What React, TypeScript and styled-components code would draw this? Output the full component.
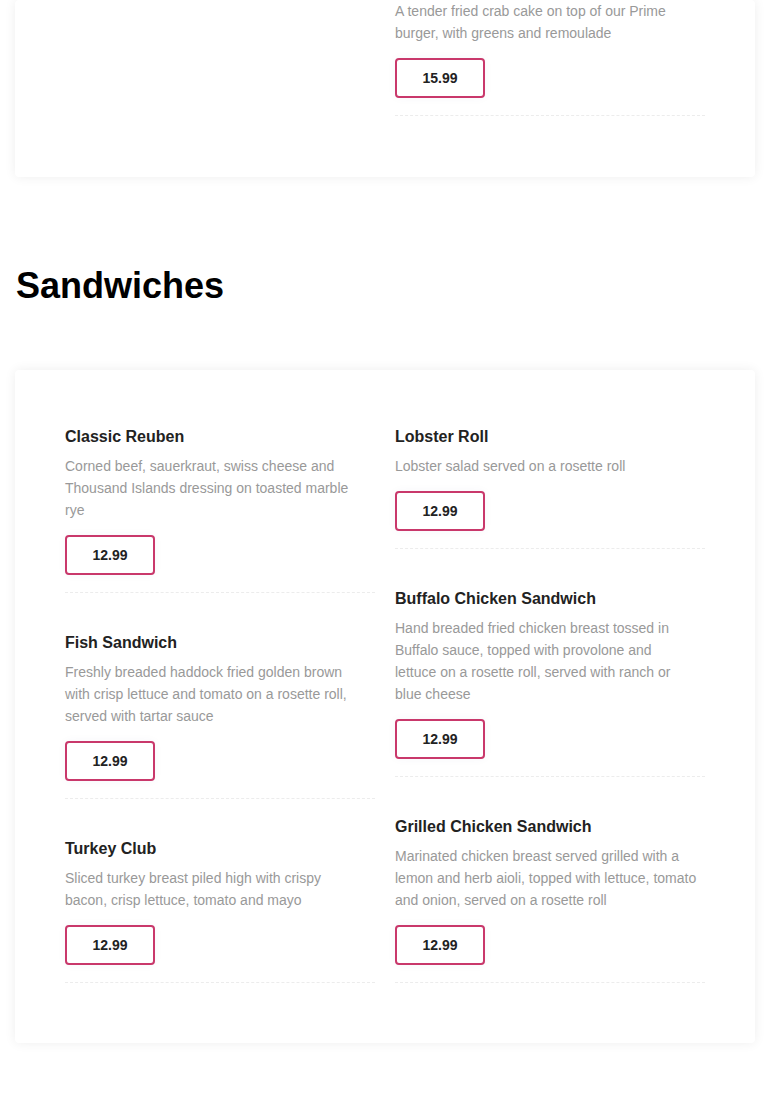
import React from "react";
import styled, { createGlobalStyle } from "styled-components";

const Global = createGlobalStyle`
  html, body { margin: 0; padding: 0; background: #fff; }
  body { font-family: "Liberation Sans", Arial, Helvetica, sans-serif; color: #222; }
  * { box-sizing: border-box; }
`;

const Page = styled.div`
  padding: 0 15px 60px;
`;

const Card = styled.section<{ $top?: number; $bottom?: number }>`
  background: #fff;
  border-radius: 4px;
  box-shadow: 0 0 12px rgba(0, 0, 0, 0.07);
  padding: ${(p) => (p.$top ?? 58)}px 50px ${(p) => (p.$bottom ?? 60)}px;
  display: grid;
  grid-template-columns: 310px 310px;
  column-gap: 20px;
  align-items: start;
`;

const Column = styled.div`
  display: flex;
  flex-direction: column;
  gap: 41px;
`;

const Heading = styled.h2`
  margin: 87px 0 63px 1px;
  font-size: 36px;
  line-height: 43px;
  font-weight: 700;
  color: #000;
`;

const Item = styled.article`
  display: flex;
  flex-direction: column;
  align-items: flex-start;
  padding-bottom: 17px;
  border-bottom: 1px dashed #ececec;
`;

const Title = styled.h3`
  margin: 0 0 9px;
  font-size: 16px;
  line-height: 18px;
  font-weight: 700;
  color: #222;
`;

const Desc = styled.p`
  margin: 0 0 14px;
  max-width: 301.7px;
  font-size: 14px;
  line-height: 22px;
  color: #999;
`;

const Price = styled.button`
  width: 90px;
  height: 40px;
  border: 2px solid #c9386b;
  border-radius: 4px;
  background: #fff;
  box-shadow: 0 0 10px rgba(0, 40, 120, 0.04);
  font-family: inherit;
  font-size: 14px;
  font-weight: 700;
  color: #222;
  padding: 0;
`;

type MenuItem = { title?: string; desc: string; price: string };

const MenuEntry = ({ item }: { item: MenuItem }) => (
  <Item>
    {item.title && <Title>{item.title}</Title>}
    <Desc>{item.desc}</Desc>
    <Price>{item.price}</Price>
  </Item>
);

const left: MenuItem[] = [
  {
    title: "Classic Reuben",
    desc: "Corned beef, sauerkraut, swiss cheese and Thousand Islands dressing on toasted marble rye",
    price: "12.99",
  },
  {
    title: "Fish Sandwich",
    desc: "Freshly breaded haddock fried golden brown with crisp lettuce and tomato on a rosette roll, served with tartar sauce",
    price: "12.99",
  },
  {
    title: "Turkey Club",
    desc: "Sliced turkey breast piled high with crispy bacon, crisp lettuce, tomato and mayo",
    price: "12.99",
  },
];

const right: MenuItem[] = [
  {
    title: "Lobster Roll",
    desc: "Lobster salad served on a rosette roll",
    price: "12.99",
  },
  {
    title: "Buffalo Chicken Sandwich",
    desc: "Hand breaded fried chicken breast tossed in Buffalo sauce, topped with provolone and lettuce on a rosette roll, served with ranch or blue cheese",
    price: "12.99",
  },
  {
    title: "Grilled Chicken Sandwich",
    desc: "Marinated chicken breast served grilled with a lemon and herb aioli, topped with lettuce, tomato and onion, served on a rosette roll",
    price: "12.99",
  },
];

export default function App() {
  return (
    <>
      <Global />
      <Page>
        <Card $top={0} $bottom={61}>
          <Column />
          <Column>
            <MenuEntry
              item={{
                desc: "A tender fried crab cake on top of our Prime burger, with greens and remoulade",
                price: "15.99",
              }}
            />
          </Column>
        </Card>
        <Heading>Sandwiches</Heading>
        <Card>
          <Column>
            {left.map((it) => (
              <MenuEntry key={it.title} item={it} />
            ))}
          </Column>
          <Column>
            {right.map((it) => (
              <MenuEntry key={it.title} item={it} />
            ))}
          </Column>
        </Card>
      </Page>
    </>
  );
}
